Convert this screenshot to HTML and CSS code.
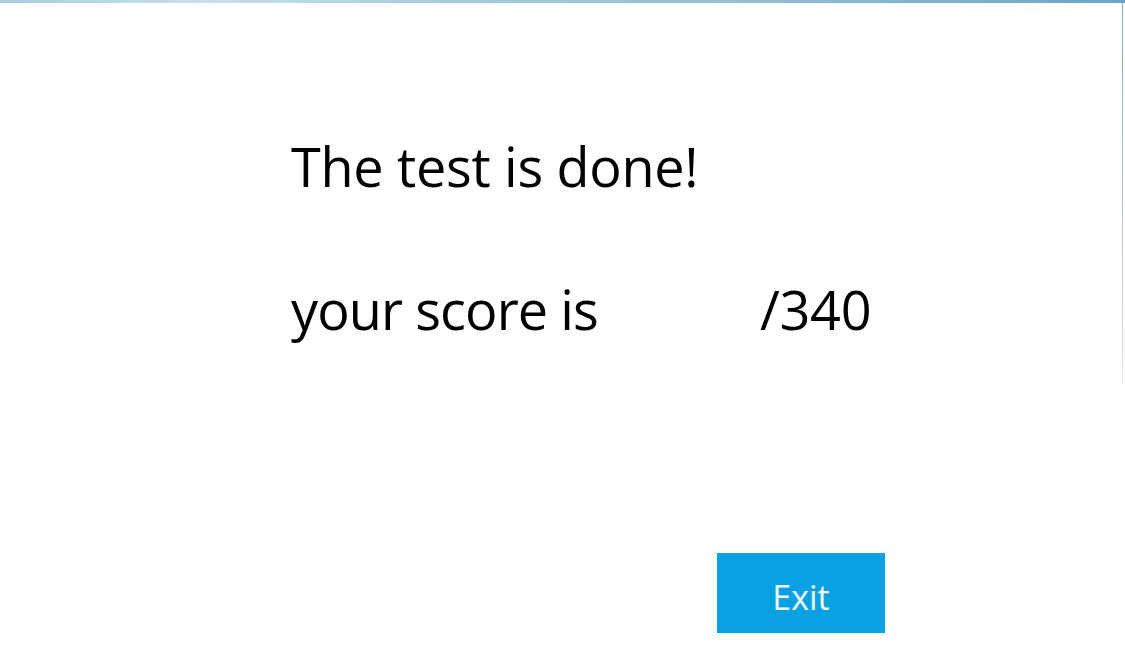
FILE: index.html
```html
<!DOCTYPE html>
<html>
<head>
<meta charset="utf-8">
<link rel="stylesheet" href="styles.css">
</head>
<body>
<div class="window">
  <div class="topbar"></div>
  <div class="content">
    <h1 class="title">The test is done!</h1>
    <div class="score">
      <span class="score-label">your score is</span>
      <span class="score-total">/340</span>
    </div>
    <div class="actions">
      <button class="exit">Exit</button>
    </div>
  </div>
</div>
</body>
</html>
```
FILE: styles.css
```css
html, body {
  margin: 0;
  padding: 0;
  background: #ffffff;
}
body {
  width: 1125px;
  height: 662px;
  overflow: hidden;
  font-family: "Open Sans", "Liberation Sans", sans-serif;
  color: #000;
}
.window {
  position: relative;
  height: 662px;
}
.window::after {
  content: "";
  position: absolute;
  right: 2px;
  top: 3px;
  width: 1px;
  height: 382px;
  background: linear-gradient(to bottom, #7fb2cf, #b9c6cc 60%, #e6eaec);
}
.topbar {
  height: 3px;
  background: linear-gradient(to right, #a9cde0, #c9dfea 18%, #a6cbe0 40%, #8fbcd6 70%, #6aa5c8);
}
.content {
  padding: 0 0 0 291px;
  display: flex;
  flex-direction: column;
}
.title {
  margin: 125px 0 0 0;
  font-weight: 400;
  font-size: 54px;
  line-height: 76px;
  letter-spacing: -0.3px;
}
.score {
  margin-top: 67px;
  display: flex;
  font-size: 54px;
  line-height: 76px;
  letter-spacing: -0.3px;
}
.score-label {
  width: 469px;
  letter-spacing: -0.9px;
}
.actions {
  margin-top: 206px;
  padding-left: 426px;
}
.exit {
  width: 168px;
  height: 80px;
  border: none;
  background: #0aa1e2;
  color: #eefaff;
  font-family: "Open Sans", "Liberation Sans", sans-serif;
  font-size: 34px;
  padding: 8px 0 0 0;
  cursor: pointer;
}
```
